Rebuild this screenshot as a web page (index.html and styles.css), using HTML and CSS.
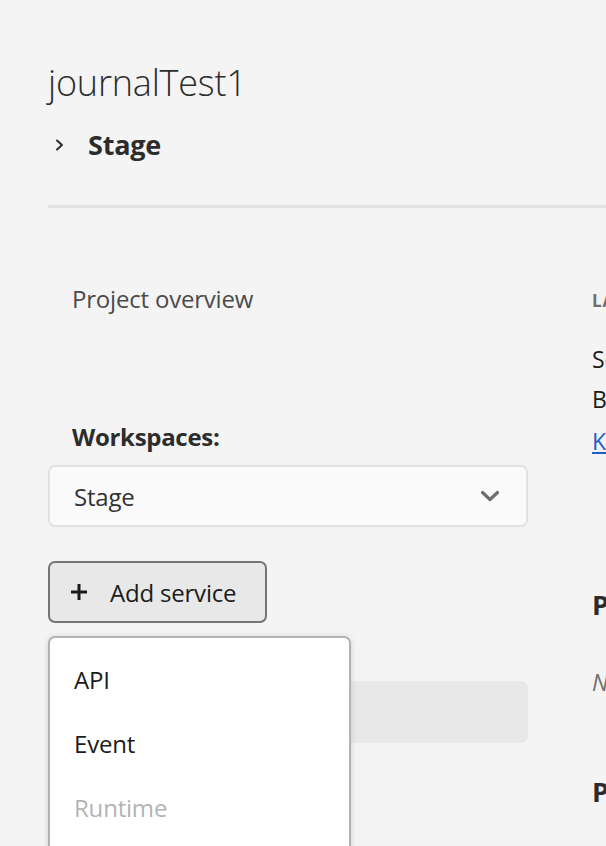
FILE: index.html
```html
<!DOCTYPE html>
<html lang="en">
<head>
<meta charset="utf-8">
<title>journalTest1</title>
<link rel="stylesheet" href="styles.css">
</head>
<body>
<div class="page">
  <header class="header">
    <h1 class="title">journalTest1</h1>
    <div class="crumb">
      <svg class="crumb-icon" width="10" height="12" viewBox="0 0 10 12"><path d="M2 1.5 L7 6 L2 10.5" fill="none" stroke="#2c2c2c" stroke-width="2" stroke-linecap="round" stroke-linejoin="round"/></svg>
      <span class="crumb-text">Stage</span>
    </div>
  </header>
  <div class="divider"></div>
  <main class="main">
    <section class="left">
      <div class="nav-item">Project overview</div>
      <div class="ws-label">Workspaces:</div>
      <div class="select">
        <span class="select-value">Stage</span>
        <svg class="select-icon" width="20" height="12" viewBox="0 0 20 12"><path d="M2.5 2.5 L10 9.5 L17.5 2.5" fill="none" stroke="#6e6e6e" stroke-width="3.2" stroke-linecap="round" stroke-linejoin="round"/></svg>
      </div>
      <div class="add-wrap">
        <button class="add-btn">
          <svg class="plus" width="18" height="18" viewBox="0 0 18 18"><path d="M9 1 V17 M1 9 H17" stroke="#1b1b1b" stroke-width="3" stroke-linecap="butt"/></svg>
          <span>Add service</span>
        </button>
        <div class="menu">
          <div class="menu-item">API</div>
          <div class="menu-item">Event</div>
          <div class="menu-item disabled">Runtime</div>
        </div>
      </div>
      <div class="ghost-row"></div>
    </section>
    <section class="right">
      <div class="meta-label">Last modified</div>
      <div class="meta-line first">Sep 14, 2023</div>
      <div class="meta-line">By developer</div>
      <a class="meta-link" href="#">Kim Lee</a>
      <h2 class="sec-title">Products &amp; services</h2>
      <p class="sec-empty">No products added yet</p>
      <h2 class="sec-title second">Project details</h2>
    </section>
  </main>
</div>
</body>
</html>
```
FILE: styles.css
```css
html, body {
  margin: 0;
  padding: 0;
  background: #f4f4f4;
  overflow: hidden;
}
body {
  font-family: "Open Sans", "Noto Sans", sans-serif;
  color: #2c2c2c;
  width: 606px;
  height: 846px;
}
.page {
  width: 606px;
}
.header {
  padding: 61px 0 0 48px;
}
.title {
  margin: 0;
  font-size: 36px;
  line-height: 44px;
  font-weight: 300;
  color: #2c2c2c;
  letter-spacing: -0.2px;
}
.crumb {
  margin-top: 22px;
  display: flex;
  align-items: center;
  height: 36px;
}
.crumb-icon {
  margin-left: 7px;
  margin-right: 23px;
}
.crumb-text {
  font-size: 27px;
  line-height: 36px;
  font-weight: 700;
  letter-spacing: -0.2px;
  color: #2c2c2c;
}
.divider {
  margin: 42px 0 0 48px;
  height: 3px;
  background: #e1e1e1;
  border-radius: 2px 0 0 2px;
}
.main {
  display: grid;
  grid-template-columns: 480px 200px;
  column-gap: 64px;
  padding-left: 48px;
}
.left {
  display: flex;
  flex-direction: column;
  align-items: flex-start;
}
.nav-item {
  margin-top: 75px;
  padding-left: 24px;
  font-size: 24px;
  line-height: 32px;
  color: #4b4b4b;
  letter-spacing: -0.2px;
}
.ws-label {
  margin-top: 106px;
  padding-left: 24px;
  font-size: 24px;
  line-height: 32px;
  font-weight: 700;
  color: #2c2c2c;
  letter-spacing: -0.3px;
}
.select {
  margin-top: 12px;
  box-sizing: border-box;
  width: 480px;
  height: 62px;
  background: #fafafa;
  border: 2px solid #e1e1e1;
  border-radius: 7px;
  display: flex;
  align-items: center;
  justify-content: space-between;
  padding: 0 26px 0 24px;
}
.select-value {
  font-size: 24px;
  color: #323232;
  letter-spacing: -0.2px;
}
.add-wrap {
  position: relative;
  margin-top: 34px;
}
.add-btn {
  box-sizing: border-box;
  height: 62px;
  width: 219px;
  background: #e8e8e8;
  border: 2px solid #747474;
  border-radius: 7px;
  display: flex;
  align-items: center;
  padding: 0 0 0 20px;
  font-family: inherit;
  font-size: 24px;
  color: #1b1b1b;
  letter-spacing: -0.2px;
  gap: 22px;
}
.plus {
  flex: none;
}
.menu {
  position: absolute;
  left: 0;
  top: 75px;
  z-index: 2;
  box-sizing: border-box;
  width: 303px;
  height: 240px;
  background: #ffffff;
  border: 2px solid #b3b3b3;
  border-radius: 7px;
  box-shadow: 0 1px 6px rgba(0, 0, 0, 0.15);
  padding-top: 10px;
}
.menu-item {
  height: 64px;
  line-height: 64px;
  padding-left: 24px;
  font-size: 24px;
  color: #1b1b1b;
  letter-spacing: -0.2px;
}
.menu-item.disabled {
  color: #b3b3b3;
}
.ghost-row {
  margin-top: 58px;
  width: 480px;
  height: 62px;
  background: #e8e8e8;
  border-radius: 7px;
}
.right {
  display: flex;
  flex-direction: column;
  align-items: flex-start;
  white-space: nowrap;
}
.meta-label {
  margin-top: 81px;
  font-size: 17px;
  line-height: 24px;
  font-weight: 700;
  text-transform: uppercase;
  letter-spacing: 0.8px;
  color: #6e6e6e;
}
.meta-line {
  font-size: 23px;
  line-height: 40px;
  color: #1b1b1b;
}
.meta-line.first {
  margin-top: 26px;
}
.meta-link {
  font-size: 23px;
  line-height: 44px;
  color: #1e5fc8;
  text-decoration: underline;
}
.sec-title {
  margin: 124px 0 0 0;
  font-size: 27px;
  line-height: 36px;
  font-weight: 700;
  color: #2c2c2c;
}
.sec-empty {
  margin: 43px 0 0 0;
  font-size: 23px;
  line-height: 32px;
  font-style: italic;
  color: #6e6e6e;
}
.sec-title.second {
  margin-top: 76px;
}
```
